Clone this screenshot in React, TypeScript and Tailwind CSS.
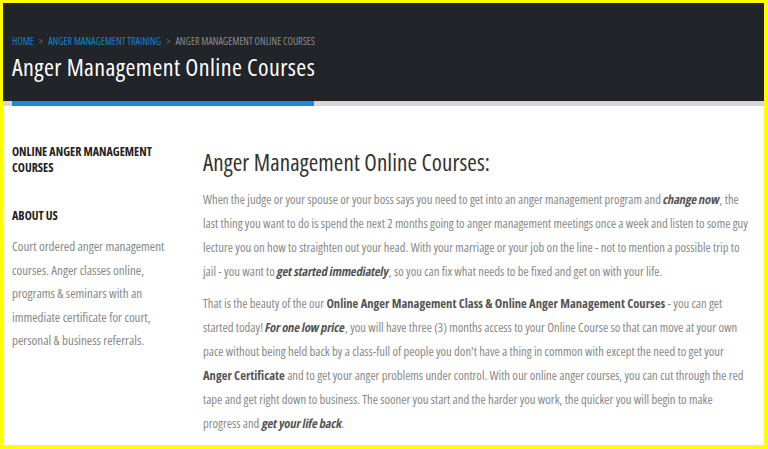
export default function App() {
  const font = { fontFamily: '"Open Sans", "Liberation Sans", sans-serif' };
  const bi = "font-bold text-[#555] inline-block -skew-x-[11deg] tracking-[-0.2px]";
  return (
    <div className="w-[768px] h-[449px] bg-[#ffff00] pl-[3px] pt-[3px] pr-[4px] pb-[4px]" style={font}>
      <div className="w-full h-full bg-white overflow-hidden font-stretch-condensed">
        <header className="bg-[#212429] h-[98px] flex flex-col px-[9px] pt-[32px]">
          <nav className="text-[10px] leading-[12px] uppercase flex items-center gap-[5px]">
            <span className="text-[#1a82c4]">Home</span>
            <span className="text-[#6b6e73]">&gt;</span>
            <span className="text-[#1a82c4]">Anger Management Training</span>
            <span className="text-[#6b6e73]">&gt;</span>
            <span className="text-[#8a8d91]">Anger Management Online Courses</span>
          </nav>
          <h1 className="text-white text-[24px] leading-[30px] mt-[5px] tracking-[0.4px]">Anger Management Online Courses</h1>
        </header>
        <div className="h-[5px] bg-[#d6d6d6] pl-[9px]">
          <div className="w-[302px] h-full bg-[#1a8ad4]" />
        </div>
        <div className="flex px-[9px] pt-[38px]">
          <aside className="w-[191px] shrink-0 pr-[16px]">
            <h3 className="text-[12px] leading-[16px] font-bold text-[#222] uppercase">Online Anger Management Courses</h3>
            <h3 className="text-[12px] leading-[16px] font-bold text-[#222] uppercase mt-[32px]">About Us</h3>
            <p className="text-[13px] leading-[23.5px] text-[#888] mt-[11px]">
              Court ordered anger management courses. Anger classes online, programs &amp; seminars with an immediate certificate for court, personal &amp; business referrals.
            </p>
          </aside>
          <main className="flex-1 pr-[4px]">
            <h2 className="text-[23px] leading-[30px] text-[#333] mt-[3px] tracking-[0.1px]">Anger Management Online Courses:</h2>
            <p className="text-[12.6px] leading-[24px] text-[#888] mt-[11px]">
              When the judge or your spouse or your boss says you need to get into an anger management program and <b className={bi}>change now</b>, the last thing you want to do is spend the next 2 months going to anger management meetings once a week and listen to some guy lecture you on how to straighten out your head. With your marriage or your job on the line - not to mention a possible trip to jail - you want to <b className={bi}>get started immediately</b>, so you can fix what needs to be fixed and get on with your life.
            </p>
            <p className="text-[12.6px] leading-[24px] text-[#888] mt-[8px]">
              That is the beauty of the our <b className="text-[#555]">Online Anger Management Class &amp; Online Anger Management Courses</b> - you can get started today! <b className={bi}>For one low price</b>, you will have three (3) months access to your Online Course so that can move at your own pace without being held back by a class-full of people you don't have a thing in common with except the need to get your <b className="text-[#555]">Anger Certificate</b> and to get your anger problems under control. With our online anger courses, you can cut through the red tape and get right down to business. The sooner you start and the harder you work, the quicker you will begin to make progress and <b className={bi}>get your life back</b>.
            </p>
          </main>
        </div>
      </div>
    </div>
  );
}
